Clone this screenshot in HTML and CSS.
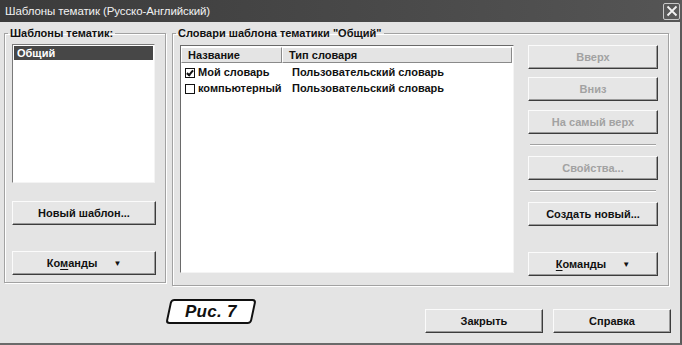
FILE: index.html
```html
<!DOCTYPE html>
<html lang="ru">
<head>
    <meta charset="UTF-8">
    <title>Шаблоны тематик</title>
    <link rel="stylesheet" href="styles.css">
</head>
<body>

    <div class="window">
        <!-- Title Bar -->
        <div class="title-bar">
            <span class="title">Шаблоны тематик (Русско-Английский)</span>
            <button class="close-btn">
                <svg width="12" height="12" viewBox="0 0 12 12">
                    <path d="M1.5 1.5 L10.5 10.5 M10.5 1.5 L1.5 10.5" stroke="#f2f2f2" stroke-width="1.8" fill="none"/>
                </svg>
            </button>
        </div>

        <div class="body">
            <div class="groups">
                <!-- Left group -->
                <fieldset class="group group-left">
                    <legend>Шаблоны тематик:</legend>
                    <div class="group-inner">
                        <div class="listbox">
                            <div class="list-item selected">Общий</div>
                        </div>
                        <button class="btn btn-new">Новый шаблон...</button>
                        <button class="btn btn-cmd">Ко<u>м</u>анды <span class="arrow">▼</span></button>
                    </div>
                </fieldset>

                <!-- Right group -->
                <fieldset class="group group-right">
                    <legend>Словари шаблона тематики "Общий"</legend>
                    <div class="group-inner row">
                        <div class="listview">
                            <div class="lv-header">
                                <div class="col col-name">Название</div>
                                <div class="col col-type">Тип словаря</div>
                            </div>
                            <div class="lv-row">
                                <div class="col col-name"><span class="check checked"></span>Мой словарь</div>
                                <div class="col col-type">Пользовательский словарь</div>
                            </div>
                            <div class="lv-row">
                                <div class="col col-name"><span class="check"></span>компьютерный</div>
                                <div class="col col-type">Пользовательский словарь</div>
                            </div>
                        </div>

                        <div class="side-buttons">
                            <button class="btn disabled b-up">Вверх</button>
                            <button class="btn disabled b-down">Вниз</button>
                            <button class="btn disabled b-top">На самый верх</button>
                            <div class="sep"></div>
                            <button class="btn disabled b-props">Свойства...</button>
                            <div class="sep"></div>
                            <button class="btn b-create">Создать новый...</button>
                            <button class="btn btn-cmd b-cmd"><u>К</u>оманды <span class="arrow">▼</span></button>
                        </div>
                    </div>
                </fieldset>
            </div>

            <!-- Bottom row -->
            <div class="bottom">
                <div class="fig"><span>Рис. 7</span></div>
                <div class="dlg-buttons">
                    <button class="btn btn-dlg">Закрыть</button>
                    <button class="btn btn-dlg">Справка</button>
                </div>
            </div>
        </div>
    </div>

</body>
</html>
```

FILE: styles.css
```css
body {
    margin: 0;
    background: #e4e4e4;
    font-family: "Liberation Sans", Arial, sans-serif;
    font-size: 11px;
    font-weight: bold;
    color: #111;
}

.window {
    width: 682px;
    height: 345px;
    box-sizing: border-box;
    display: flex;
    flex-direction: column;
    border-right: 2px solid #5a5a5a;
    border-bottom: 2px solid #6a6a6a;
    overflow: hidden;
}

/* Title bar */
.title-bar {
    height: 22px;
    flex-shrink: 0;
    display: flex;
    align-items: center;
    justify-content: space-between;
    padding: 0 0 0 5px;
    background: linear-gradient(to right, #3b3b3b, #4a4a4a 60%, #555);
    color: #f2f2f2;
}

.title {
    font-size: 11.5px;
    font-weight: normal;
    letter-spacing: -0.1px;
}

.close-btn {
    width: 17px;
    height: 17px;
    margin-right: 0;
    padding: 0;
    display: flex;
    align-items: center;
    justify-content: center;
    background: #595959;
    border: 1px solid #c8c8c8;
    border-radius: 2px;
}

.body {
    flex: 1;
    display: flex;
    flex-direction: column;
    padding: 5px 0 0 4px;
}

.groups {
    display: flex;
    align-items: flex-start;
    gap: 6px;
}

/* Group boxes */
.group {
    margin: 0;
    padding: 0;
    border: 1px solid #a2a2a2;
    box-shadow: 1px 1px 0 #fff, inset 1px 1px 0 #fff;
    min-width: 0;
}

.group legend {
    padding: 0 2px;
    margin-left: 3px;
    font-size: 11px;
    line-height: 13px;
    font-weight: bold;
}

.group-left {
    width: 162px;
    height: 256px;
    box-sizing: border-box;
}

.group-right {
    width: 497px;
    height: 259px;
    box-sizing: border-box;
}

.group-inner {
    display: flex;
    flex-direction: column;
    padding: 4px 0 0 7px;
}

.group-inner.row {
    flex-direction: row;
    padding: 5px 0 0 7px;
    gap: 14px;
}

/* Left list box */
.listbox {
    width: 143px;
    height: 139px;
    box-sizing: border-box;
    background: #fff;
    border: 1px solid;
    border-color: #7a7a7a #f4f4f4 #f4f4f4 #7a7a7a;
    padding: 1px;
}

.list-item {
    height: 14px;
    line-height: 14px;
    padding-left: 3px;
}

.list-item.selected {
    background: #474747;
    color: #fff;
}

/* Buttons */
.btn {
    display: flex;
    align-items: center;
    justify-content: center;
    box-sizing: border-box;
    height: 24px;
    padding: 0;
    background: #e6e6e6;
    border: 1px solid;
    border-color: #fbfbfb #3c3c3c #3c3c3c #fbfbfb;
    box-shadow: inset -1px -1px 0 #9a9a9a;
    font-family: inherit;
    font-size: 11px;
    font-weight: bold;
    color: #111;
}

.btn.disabled {
    color: #a2a2a2;
}

.btn u {
    text-decoration-thickness: 1px;
    text-underline-offset: 2px;
}

.arrow {
    font-size: 8px;
    margin-left: 16px;
}

.btn-new {
    width: 144px;
    margin-top: 18px;
}

.group-left .btn-cmd {
    width: 144px;
    margin-top: 26px;
}

/* List view */
.listview {
    width: 334px;
    height: 228px;
    box-sizing: border-box;
    background: #fff;
    border: 1px solid;
    border-color: #6a6a6a #f4f4f4 #f4f4f4 #6a6a6a;
    padding-top: 1px;
}

.lv-header {
    display: flex;
    height: 16px;
    margin-right: 1px;
}

.lv-header .col {
    box-sizing: border-box;
    height: 16px;
    line-height: 14px;
    background: #e4e4e4;
    border: 1px solid;
    border-color: #fff #8a8a8a #8a8a8a #fff;
    padding-left: 6px;
}

.col-name {
    width: 101px;
    display: flex;
    align-items: center;
}

.col-type {
    flex: 1;
}

.lv-row {
    display: flex;
    height: 15px;
    line-height: 15px;
    margin-top: 1px;
}

.lv-header + .lv-row {
    margin-top: 2px;
}

.lv-row .col-name {
    padding-left: 4px;
}

.lv-row .col-type {
    padding-left: 6px;
}

.check {
    display: inline-block;
    width: 10px;
    height: 10px;
    box-sizing: border-box;
    border: 1.5px solid #111;
    margin-right: 3px;
    position: relative;
}

.check.checked::after {
    content: "";
    position: absolute;
    left: 2px;
    top: 0px;
    width: 2px;
    height: 5px;
    border: solid #111;
    border-width: 0 2px 2px 0;
    transform: rotate(40deg);
}

/* Right side buttons */
.side-buttons {
    width: 130px;
    display: flex;
    flex-direction: column;
}

.side-buttons .btn {
    width: 130px;
}

.b-down {
    margin-top: 8px;
}

.b-top {
    margin-top: 9px;
}

.sep {
    height: 0;
    border-top: 1px solid #a2a2a2;
    border-bottom: 1px solid #fff;
    margin: 10px 2px;
}

.b-cmd {
    margin-top: 26px;
}

/* Bottom */
.bottom {
    display: flex;
    align-items: flex-start;
    padding-top: 11px;
}

.fig {
    margin-left: 164px;
    margin-top: 2px;
    width: 86px;
    height: 25px;
    box-sizing: border-box;
    border: 2px solid #111;
    border-radius: 4px;
    background: #fff;
    transform: skewX(-12deg);
    display: flex;
    align-items: center;
    justify-content: center;
}

.fig span {
    transform: skewX(12deg);
    font-size: 17px;
    font-style: italic;
    font-weight: bold;
    letter-spacing: 0.3px;
}

.dlg-buttons {
    display: flex;
    gap: 10px;
    margin-left: 171px;
    margin-top: 12px;
}

.btn-dlg {
    width: 118px;
    height: 24px;
}
```
